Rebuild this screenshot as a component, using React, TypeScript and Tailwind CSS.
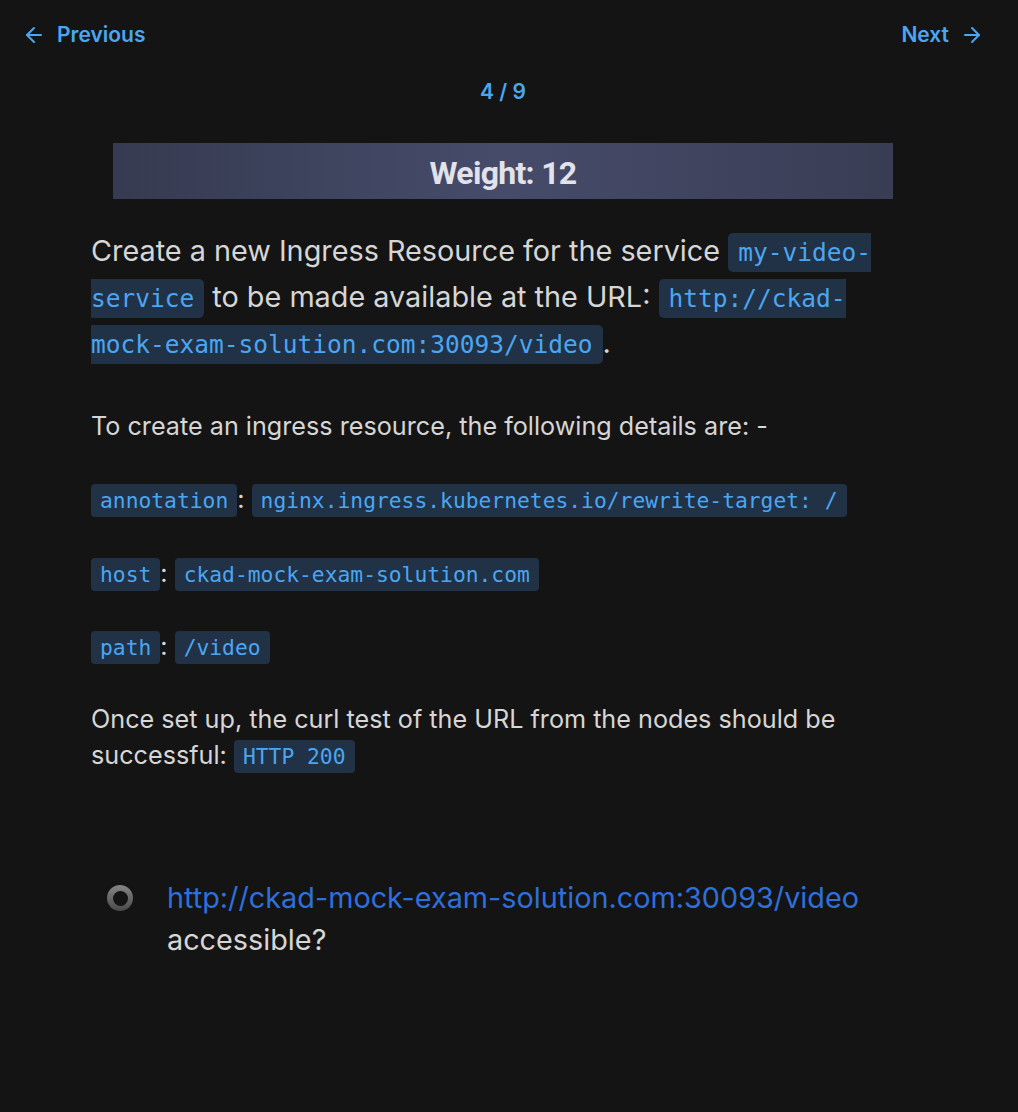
import React from "react";
import { ArrowLeft, ArrowRight } from "lucide-react";

const C1 = ({ children }: { children: React.ReactNode }) => (
  <code
    className="rounded-[5px] bg-[#213246] px-[10px] py-[5px] leading-none text-[#4ba6f2] [font-family:'DejaVu_Sans_Mono',monospace] text-[24.5px]"
    style={{ WebkitBoxDecorationBreak: "slice", boxDecorationBreak: "slice" }}
  >
    {children}
  </code>
);

const C2 = ({ children }: { children: React.ReactNode }) => (
  <code className="rounded-[4px] bg-[#213246] px-[9px] py-[4px] leading-none text-[#4ba6f2] [font-family:'DejaVu_Sans_Mono',monospace] text-[21.3px]">
    {children}
  </code>
);

export default function App() {
  return (
    <div className="min-h-[1112px] w-full bg-[#141414] [font-family:Inter,'Noto_Sans',sans-serif]">
      <div className="w-[1006px]">
        <div className="flex items-center justify-between px-6 pt-[23px]">
          <button className="flex items-center gap-[11px] text-[21px] font-semibold text-[#4ba6f2] leading-[24px]">
            <ArrowLeft size={24} strokeWidth={2} className="-ml-[2px]" />
            Previous
          </button>
          <button className="flex items-center gap-[11px] text-[21px] font-semibold text-[#4ba6f2] leading-[24px]">
            Next
            <ArrowRight size={24} strokeWidth={2} className="-mr-[2px]" />
          </button>
        </div>
        <div className="mt-[33px] text-center text-[21px] font-semibold leading-[24px] text-[#4ba6f2]">
          4 / 9
        </div>
        <div className="mx-auto mt-[39px] flex h-[56px] w-[780px] items-center justify-center bg-[linear-gradient(90deg,#363b51_0%,#464b6a_50%,#393d54_100%)]">
          <span className="mt-[3px] text-[32px] font-bold tracking-[-0.7px] text-[#e2e2ea] [font-family:Roboto,Inter,sans-serif]">
            Weight: 12
          </span>
        </div>
        <div className="mx-auto w-[824px] text-[#d6d6d6]">
          <p className="mt-[29px] text-[28.8px] leading-[46px]">
            Create a new Ingress Resource for the service <C1>my-video-service</C1> to be made
            available at the URL: <C1>http://ckad-mock-exam-solution.com:30093/video</C1>.
          </p>
          <p className="mt-[42px] text-[25.2px] leading-[36px]">
            To create an ingress resource, the following details are: -
          </p>
          <p className="mt-[37px] text-[25.2px] leading-[36px]">
            <C2>annotation</C2>: <C2>nginx.ingress.kubernetes.io/rewrite-target: /</C2>
          </p>
          <p className="mt-[38px] text-[25.2px] leading-[36px]">
            <C2>host</C2>: <C2>ckad-mock-exam-solution.com</C2>
          </p>
          <p className="mt-[37px] text-[25.2px] leading-[36px]">
            <C2>path</C2>: <C2>/video</C2>
          </p>
          <p className="mt-[37px] text-[25.2px] leading-[36px]">
            Once set up, the curl test of the URL from the nodes should be successful:{" "}
            <C2>HTTP 200</C2>
          </p>
          <div className="mt-[104px] flex items-start pl-[16px]">
            <div className="mt-[8px] flex h-[26px] w-[26px] shrink-0 items-center justify-center rounded-full bg-[linear-gradient(180deg,#858585,#4a4a4a)]">
              <div className="h-[15px] w-[15px] rounded-full bg-[#141414]" />
            </div>
            <div className="ml-[34px] w-[720px] text-[28.8px] leading-[42px] text-[#d6d6d6]">
              <span className="text-[#2f6fdc]">http://ckad-mock-exam-solution.com:30093/video</span>{" "}
              accessible?
            </div>
          </div>
        </div>
      </div>
    </div>
  );
}
